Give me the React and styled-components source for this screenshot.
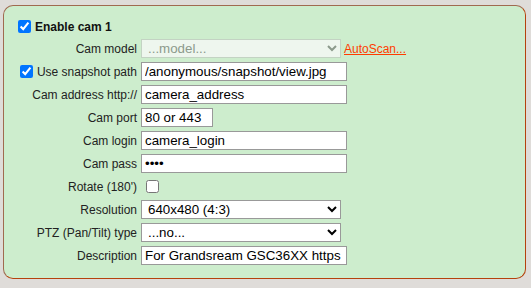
import React from "react";
import styled, { createGlobalStyle } from "styled-components";

const Global = createGlobalStyle`
  body {
    margin: 0;
    background: #dfdcd9;
    font-family: "Liberation Sans", Arial, sans-serif;
  }
`;

const Panel = styled.div`
  box-sizing: border-box;
  width: 523px;
  margin: 5px 0 0 3px;
  padding: 14px 14px 13px 14px;
  background: #cdedcd;
  border: 1px solid;
  border-color: #a06a50 #b5420e #b5420e #a06a50;
  border-radius: 10px;
  color: #222;
  font-size: 12px;
`;

const Header = styled.label`
  display: flex;
  align-items: center;
  height: 13px;
  gap: 4px;
  font-weight: bold;
  font-size: 12px;
  color: #111;
`;

const Check = styled.input.attrs({ type: "checkbox" })`
  margin: 0;
  width: 13px;
  height: 13px;
  accent-color: #0075ff;
`;

const Form = styled.div`
  display: grid;
  grid-template-columns: 119px auto;
  column-gap: 4px;
  row-gap: 4px;
  margin-top: 6px;
`;

const Label = styled.label`
  display: flex;
  align-items: center;
  justify-content: flex-end;
  height: 19px;
  gap: 4px;
  white-space: nowrap;
  text-align: right;
`;

const Cell = styled.div`
  display: flex;
  align-items: center;
  height: 19px;
  gap: 3px;
`;

const Text = styled.input`
  box-sizing: border-box;
  width: ${(p) => p.$w || 206}px;
  height: 19px;
  margin: 0;
  padding: 0 3px;
  border: 1px solid #999;
  background: #fff;
  color: #000;
  font-family: "Liberation Sans", Arial, sans-serif;
  font-size: 13.33px;
  outline: none;
`;

const Select = styled.select`
  box-sizing: border-box;
  width: 200px;
  height: 19px;
  margin: 0;
  padding: 0 0 0 2px;
  border: 1px solid #999;
  border-radius: 0;
  background: #fff;
  color: #000;
  font-family: "Liberation Sans", Arial, sans-serif;
  font-size: 13.33px;

  &:disabled {
    background: #eef6ee;
    border-color: #c3d3c3;
    color: #8c9a8c;
    opacity: 1;
  }
`;

const Link = styled.a`
  color: #ff3c00;
  text-decoration: underline;
  font-size: 12px;
  cursor: pointer;
`;

const RotateCheck = styled(Check)`
  margin-left: 5px;
`;

export default function App() {
  return (
    <>
      <Global />
      <Panel>
        <Header>
          <Check defaultChecked />
          Enable cam 1
        </Header>
        <Form>
          <Label>Cam model</Label>
          <Cell>
            <Select disabled defaultValue="m">
              <option value="m">...model...</option>
            </Select>
            <Link>AutoScan...</Link>
          </Cell>

          <Label>
            <Check defaultChecked />
            Use snapshot path
          </Label>
          <Cell>
            <Text defaultValue="/anonymous/snapshot/view.jpg" />
          </Cell>

          <Label>Cam address http://</Label>
          <Cell>
            <Text defaultValue="camera_address" />
          </Cell>

          <Label>Cam port</Label>
          <Cell>
            <Text $w={72} defaultValue="80 or 443" />
          </Cell>

          <Label>Cam login</Label>
          <Cell>
            <Text defaultValue="camera_login" />
          </Cell>

          <Label>Cam pass</Label>
          <Cell>
            <Text type="password" defaultValue="1234" />
          </Cell>

          <Label>Rotate (180')</Label>
          <Cell>
            <RotateCheck />
          </Cell>

          <Label>Resolution</Label>
          <Cell>
            <Select defaultValue="640">
              <option value="640">640x480 (4:3)</option>
            </Select>
          </Cell>

          <Label>PTZ (Pan/Tilt) type</Label>
          <Cell>
            <Select defaultValue="no">
              <option value="no">...no...</option>
            </Select>
          </Cell>

          <Label>Description</Label>
          <Cell>
            <Text defaultValue="For Grandsream GSC36XX https" />
          </Cell>
        </Form>
      </Panel>
    </>
  );
}
